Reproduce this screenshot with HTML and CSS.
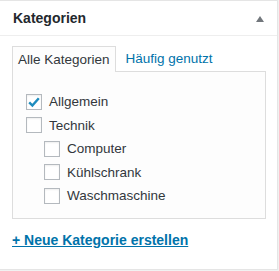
FILE: index.html
```html
<!DOCTYPE html>
<html lang="de">
  <head>
    <meta charset="UTF-8" />
    <title>Kategorien</title>
    <link rel="stylesheet" href="styles.css">
  </head>
  <body>
    <div class="postbox">
      <div class="hndle">
        <span>Kategorien</span>
        <svg class="toggle" width="8" height="6" viewBox="0 0 8 6"><path d="M4 0 L8 6 L0 6 Z" fill="#72777c"/></svg>
      </div>

      <div class="inside">
        <ul class="tabs">
          <li class="tab active">Alle Kategorien</li>
          <li class="tab">Häufig genutzt</li>
        </ul>

        <div class="panel">
          <ul class="checklist">
            <li><span class="box checked">
              <svg width="14" height="14" viewBox="0 0 14 14"><path d="M2.2 7.4 L5.4 10.6 L11.8 3.2" fill="none" stroke="#1e8cbe" stroke-width="2.4"/></svg>
            </span>Allgemein</li>
            <li><span class="box"></span>Technik</li>
            <li class="child"><span class="box"></span>Computer</li>
            <li class="child"><span class="box"></span>Kühlschrank</li>
            <li class="child"><span class="box"></span>Waschmaschine</li>
          </ul>
        </div>

        <a class="add-link" href="#">+ Neue Kategorie erstellen</a>
      </div>
    </div>
  </body>
</html>
```

FILE: styles.css
```css
body {
  margin: 0;
  background: #f1f1f1;
  font-family: "Liberation Sans", Arial, sans-serif;
  font-size: 13.5px;
  color: #32373c;
}

.postbox {
  width: 277px;
  height: 268px;
  margin-left: -1px;
  border: 1px solid #e5e5e5;
  background: #fff;
}

.hndle {
  display: flex;
  justify-content: space-between;
  align-items: center;
  height: 34px;
  padding: 0 13px 0 13px;
  border-bottom: 1px solid #eee;
  font-size: 14px;
  font-weight: bold;
  color: #23282d;
}

.toggle {
  margin-top: 1px;
}

.inside {
  padding: 10px 12px 0 12px;
}

.tabs {
  display: flex;
  align-items: flex-end;
  margin: 0;
  padding: 0;
  list-style: none;
}

.tab {
  padding: 0 5px;
  height: 25px;
  line-height: 25px;
  color: #0073aa;
}

.tab.active {
  color: #32373c;
  background: #fdfdfd;
  border: 1px solid #ddd;
  border-bottom: none;
  margin-bottom: -1px;
  position: relative;
  margin-right: 5px;
}

.panel {
  width: 252px;
  height: 146px;
  border: 1px solid #ddd;
  background: #fdfdfd;
}

.checklist {
  margin: 0;
  padding: 18px 0 0 13px;
  list-style: none;
}

.checklist li {
  display: flex;
  align-items: center;
  height: 23.5px;
}

.checklist li.child {
  padding-left: 18px;
}

.box {
  display: flex;
  align-items: center;
  justify-content: center;
  width: 14px;
  height: 14px;
  margin-right: 7px;
  border: 1px solid #b4b9be;
  background: #fff;
  box-shadow: inset 0 1px 2px rgba(0, 0, 0, 0.07);
}

.add-link {
  display: inline-block;
  margin-top: 13px;
  font-size: 14px;
  font-weight: bold;
  color: #0073aa;
  text-decoration: underline;
}
```
